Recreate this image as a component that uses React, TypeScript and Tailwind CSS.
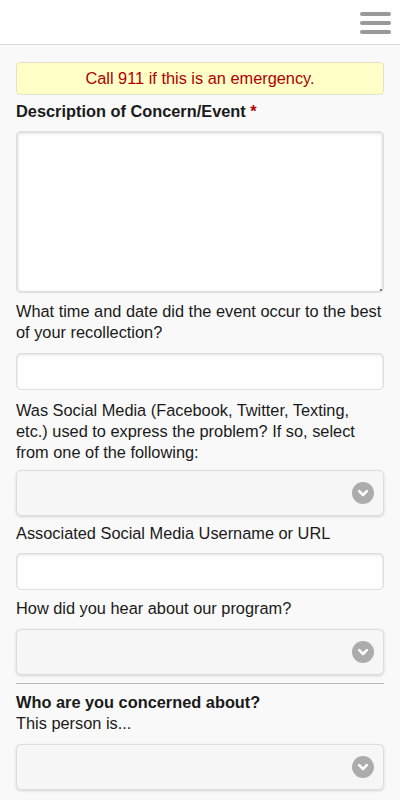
import React from "react";

function SelectBox() {
  return (
    <div className="mt-[10px] h-[46px] rounded-[5px] border border-[#dddddd] bg-[#f6f6f6] shadow-[0_1px_3px_rgba(0,0,0,0.15)] flex items-center justify-end pr-[9px]">
      <div className="w-[22px] h-[22px] rounded-full bg-[#acacac] flex items-center justify-center">
        <svg width="12" height="12" viewBox="0 0 12 12">
          <path d="M2.2 4.2 L6 8 L9.8 4.2" fill="none" stroke="#ffffff" strokeWidth="2.6" strokeLinecap="round" strokeLinejoin="round" />
        </svg>
      </div>
    </div>
  );
}

function TextInput({ mt }: { mt: string }) {
  return (
    <div className={`${mt} h-[37px] rounded-[5px] border border-[#dddddd] bg-white shadow-[inset_0_1px_3px_rgba(0,0,0,0.12)]`} />
  );
}

export default function App() {
  return (
    <div className="min-h-[800px] bg-[#f9f9f9] text-[#1a1a1a] [font-family:'Liberation_Sans',Arial,sans-serif] text-[16.35px] leading-[21px]">
      <div className="h-[45px] bg-white border-b border-[#dcdcdc] flex justify-end">
        <div className="mr-[9px] mt-[12px] flex flex-col gap-[5px]">
          <div className="w-[31px] h-[4px] rounded-full bg-[#999]" />
          <div className="w-[31px] h-[4px] rounded-full bg-[#999]" />
          <div className="w-[31px] h-[4px] rounded-full bg-[#999]" />
        </div>
      </div>
      <div className="px-4 pt-[17px] pb-4">
        <div className="h-[33px] rounded-[4px] border border-[#e2e2c8] bg-[#ffffc8] flex items-center justify-center text-[#b00000]">
          Call 911 if this is an emergency.
        </div>
        <div className="mt-[6px] font-bold">
          Description of Concern/Event <span className="text-[#b00000]">*</span>
        </div>
        <div className="relative mt-[9px] h-[162px] rounded-[5px] border-2 border-[#e0e0e0] bg-white shadow-[inset_0_1px_3px_rgba(0,0,0,0.1)]">
          <div className="absolute right-0 bottom-0 w-[2px] h-[2px] bg-[#777]" />
        </div>
        <div className="mt-[8px]">What time and date did the event occur to the best of your recollection?</div>
        <TextInput mt="mt-[10px]" />
        <div className="mt-[10px]">Was Social Media (Facebook, Twitter, Texting, etc.) used to express the problem? If so, select from one of the following:</div>
        <div className="-mt-[3px]">
          <SelectBox />
        </div>
        <div className="mt-[7px]">Associated Social Media Username or URL</div>
        <TextInput mt="mt-[9px]" />
        <div className="mt-[8px]">How did you hear about our program?</div>
        <SelectBox />
        <div className="mt-[8px] h-px bg-[#b8b8b8]" />
        <div className="mt-[8px] font-bold">Who are you concerned about?</div>
        <div>This person is...</div>
        <SelectBox />
      </div>
    </div>
  );
}
